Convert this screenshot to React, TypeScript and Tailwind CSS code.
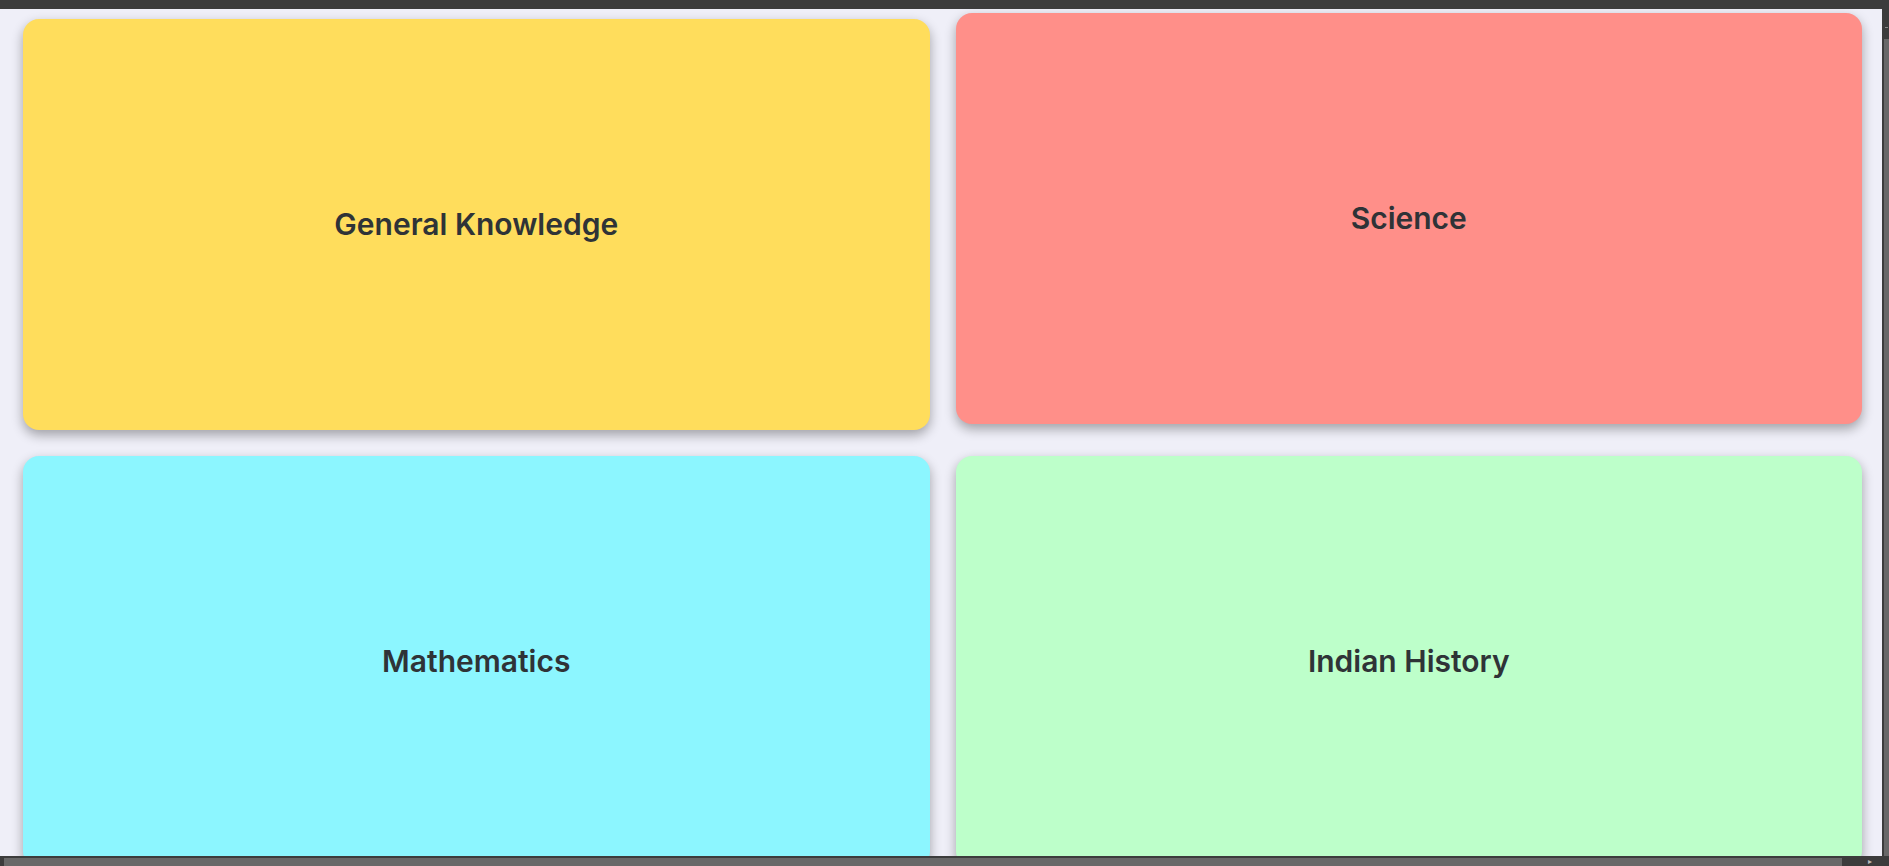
const categories = [
  { name: "General Knowledge", color: "bg-[#ffdd5c]", lifted: false },
  { name: "Science", color: "bg-[#ff8f89]", lifted: true },
  { name: "Mathematics", color: "bg-[#8cf6ff]", lifted: false },
  { name: "Indian History", color: "bg-[#bdffca]", lifted: false },
];

export default function App() {
  return (
    <div className="w-screen h-screen flex flex-col bg-[#3c3c3c] overflow-hidden">
      {/* window top strip */}
      <div className="h-[9px] shrink-0 bg-[#3c3c3c]" />

      <div className="flex flex-1 min-h-0">
        {/* page */}
        <div className="flex-1 min-w-0 overflow-hidden bg-[#efeff8] pt-[10px] pl-[23px] pr-[20px]">
          <div className="grid grid-cols-2 gap-[26px]">
            {categories.map((c) => (
              <div
                key={c.name}
                className={
                  "h-[411px] rounded-2xl flex items-center justify-center shadow-[0_5px_12px_rgba(0,0,0,0.33)] cursor-pointer transition-transform " +
                  c.color +
                  (c.lifted ? " -translate-y-[6px]" : "")
                }
              >
                <h2 className="font-['Inter',sans-serif] font-semibold text-[30px] text-[#2f3337]">
                  {c.name}
                </h2>
              </div>
            ))}
          </div>
        </div>

        {/* vertical scrollbar */}
        <div className="w-[7px] shrink-0 flex flex-col bg-[#3c3c3c] pl-[2px]">
          <div className="h-[30px] flex justify-center pt-[18px]">
            <div className="w-[3px] h-[1px] bg-[#8a8a8a]" />
          </div>
          <div className="flex-1 bg-[#686868]" />
        </div>
      </div>

      {/* horizontal scrollbar */}
      <div className="h-[10px] shrink-0 flex bg-[#3c3c3c] pt-[2px]">
        <div className="w-[4px]" />
        <div className="w-[1838px] bg-[#686868]" />
        <div className="flex-1 relative">
          <span className="absolute left-[26px] -top-[1px] text-[8px] leading-none text-[#bbbbbb]">▸</span>
        </div>
      </div>
    </div>
  );
}
